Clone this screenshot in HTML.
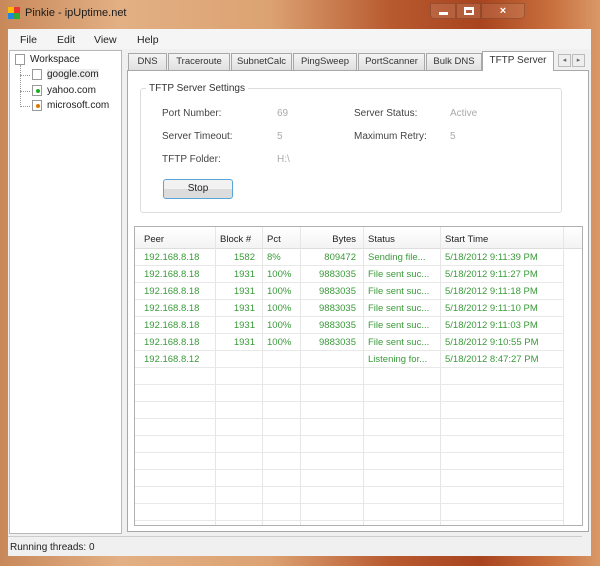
<!DOCTYPE html>
<html><head><style>
*{margin:0;padding:0;box-sizing:border-box}
body{width:600px;height:566px;position:relative;overflow:hidden;font-family:"Liberation Sans",sans-serif;font-size:10px;color:#222;background:#8a3a1e}
.a{position:absolute}
.frame{left:0;top:0;width:600px;height:566px;background:linear-gradient(90deg,#c8885a 0%,#e2b084 20%,#dca272 45%,#b85a30 65%,#a8441e 80%,#c9703e 92%,#d99868 100%)}
.win{left:8px;top:29px;width:583px;height:527px;background:#f0f0f0}
.tab{top:53px;height:17px;background:linear-gradient(#f4f4f4,#e0e0e0);border:1px solid #a8a8a8;border-bottom:none;font-size:9.5px;text-align:center;line-height:16px;color:#333}
.row{left:135px;width:428px;height:17px;border-bottom:1px solid #e8e8e8}
.c{position:absolute;top:3px;color:#3a9a3a;font-size:9.5px}
.vl{top:249px;height:276px;width:1px;background:#e6e6e6}
.lbl{font-size:10px;color:#444}
.val{font-size:10px;color:#aaa}
</style></head><body>
<div class="a frame"></div>
<div class="a" style="left:8px;top:7px;width:12px;height:12px;background:conic-gradient(#e33 0 25%,#3a3 0 50%,#28d 0 75%,#fb0 0)"></div>
<div class="a" style="left:25px;top:7px;font-size:11px;color:#1a1a1a">Pinkie - ipUptime.net</div>
<div class="a" style="left:430px;top:3px;width:26px;height:16px;background:rgba(255,255,255,.12);border:1px solid rgba(90,40,20,.35);border-radius:0 0 0 4px"><div class="a" style="left:8px;top:8px;width:9px;height:3px;background:#fff"></div></div>
<div class="a" style="left:456px;top:3px;width:25px;height:16px;background:rgba(255,255,255,.12);border:1px solid rgba(90,40,20,.35)"><div class="a" style="left:7px;top:3px;width:10px;height:8px;border:2px solid #fff;border-top-width:3px"></div></div>
<div class="a" style="left:481px;top:3px;width:44px;height:16px;background:rgba(255,255,255,.1);border:1px solid rgba(90,40,20,.35);border-radius:0 0 4px 0;color:#fff;text-align:center;font-weight:bold;font-size:11px;line-height:14px">×</div>
<div class="a win"></div>
<div class="a" style="left:8px;top:29px;width:583px;height:20px;background:#f5f5f5"></div>
<div class="a" style="left:20px;top:34px;font-size:10.5px">File</div>
<div class="a" style="left:57px;top:34px;font-size:10.5px">Edit</div>
<div class="a" style="left:94px;top:34px;font-size:10.5px">View</div>
<div class="a" style="left:137px;top:34px;font-size:10.5px">Help</div>
<div class="a" style="left:9px;top:50px;width:113px;height:484px;background:#fff;border:1px solid #b8b8b8"></div>
<div class="a" style="left:15px;top:54px;width:10px;height:11px;border:1px solid #999;background:#fff"></div>
<div class="a" style="left:30px;top:54px;font-size:10px">Workspace</div>
<div class="a" style="left:20px;top:65px;width:1px;height:42px;border-left:1px dotted #999"></div>
<div class="a" style="left:20px;top:75px;width:10px;border-top:1px dotted #999"></div>
<div class="a" style="left:20px;top:91px;width:10px;border-top:1px dotted #999"></div>
<div class="a" style="left:20px;top:106px;width:10px;border-top:1px dotted #999"></div>
<div class="a" style="left:32px;top:69px;width:10px;height:11px;border:1px solid #999;background:#fff"></div>
<div class="a" style="left:32px;top:85px;width:10px;height:11px;border:1px solid #999;background:#fff"><div class="a" style="left:3px;top:3px;width:4px;height:4px;background:#2a2;border-radius:2px"></div></div>
<div class="a" style="left:32px;top:100px;width:10px;height:11px;border:1px solid #999;background:#fff"><div class="a" style="left:3px;top:3px;width:4px;height:4px;background:#d70;border-radius:2px"></div></div>
<div class="a" style="left:47px;top:69px;font-size:10px;background:#eee">google.com</div>
<div class="a" style="left:47px;top:85px;font-size:10px">yahoo.com</div>
<div class="a" style="left:47px;top:100px;font-size:10px">microsoft.com</div>
<div class="a" style="left:127px;top:70px;width:462px;height:462px;background:#fff;border:1px solid #a8a8a8"></div>
<div class="a tab" style="left:128px;width:39px">DNS</div>
<div class="a tab" style="left:168px;width:62px">Traceroute</div>
<div class="a tab" style="left:231px;width:61px">SubnetCalc</div>
<div class="a tab" style="left:293px;width:64px">PingSweep</div>
<div class="a tab" style="left:358px;width:67px">PortScanner</div>
<div class="a tab" style="left:426px;width:56px">Bulk DNS</div>
<div class="a tab" style="left:482px;top:51px;width:72px;height:20px;background:#fff;line-height:18px;font-size:10px">TFTP Server</div>
<div class="a" style="left:558px;top:54px;width:13px;height:13px;border:1px solid #bbb;background:#eee;font-size:7px;text-align:center;line-height:12px;color:#666">◂</div>
<div class="a" style="left:572px;top:54px;width:13px;height:13px;border:1px solid #bbb;background:#eee;font-size:7px;text-align:center;line-height:12px;color:#666">▸</div>
<div class="a" style="left:140px;top:88px;width:422px;height:125px;border:1px solid #ddd;border-radius:3px"></div>
<div class="a" style="left:146px;top:83px;background:#fff;padding:0 3px;font-size:10px;color:#333">TFTP Server Settings</div>
<div class="a lbl" style="left:162px;top:108px">Port Number:</div>
<div class="a val" style="left:277px;top:108px">69</div>
<div class="a lbl" style="left:354px;top:108px">Server Status:</div>
<div class="a val" style="left:450px;top:108px">Active</div>
<div class="a lbl" style="left:162px;top:131px">Server Timeout:</div>
<div class="a val" style="left:277px;top:131px">5</div>
<div class="a lbl" style="left:354px;top:131px">Maximum Retry:</div>
<div class="a val" style="left:450px;top:131px">5</div>
<div class="a lbl" style="left:162px;top:154px">TFTP Folder:</div>
<div class="a val" style="left:277px;top:154px">H:\</div>
<div class="a" style="left:163px;top:179px;width:70px;height:20px;border:1px solid #5aa4d8;border-radius:3px;background:linear-gradient(#f2f2f2 50%,#dcdcdc 50%);text-align:center;line-height:18px;font-size:10px">Stop</div>
<div class="a" style="left:134px;top:226px;width:449px;height:300px;border:1px solid #b0b0b0;background:#fff"></div>
<div class="a" style="left:135px;top:227px;width:447px;height:22px;background:linear-gradient(#fff,#f3f3f3);border-bottom:1px solid #ddd"></div>
<div class="a" style="left:144px;top:234px;font-size:9.5px">Peer</div>
<div class="a" style="left:220px;top:234px;font-size:9.5px">Block #</div>
<div class="a" style="left:267px;top:234px;font-size:9.5px">Pct</div>
<div class="a" style="left:300px;top:234px;width:56px;text-align:right;font-size:9.5px">Bytes</div>
<div class="a" style="left:368px;top:234px;font-size:9.5px">Status</div>
<div class="a" style="left:445px;top:234px;font-size:9.5px">Start Time</div>
<div class="a vl" style="left:215px;top:227px;height:298px"></div>
<div class="a vl" style="left:262px;top:227px;height:298px"></div>
<div class="a vl" style="left:300px;top:227px;height:298px"></div>
<div class="a vl" style="left:363px;top:227px;height:298px"></div>
<div class="a vl" style="left:440px;top:227px;height:298px"></div>
<div class="a vl" style="left:563px;top:227px;height:298px"></div>
<div class="a row" style="top:249px"><span class="c" style="left:9px">192.168.8.18</span><span class="c" style="left:80px;width:40px;text-align:right">1582</span><span class="c" style="left:132px">8%</span><span class="c" style="left:165px;width:56px;text-align:right">809472</span><span class="c" style="left:233px">Sending file...</span><span class="c" style="left:310px">5/18/2012 9:11:39 PM</span></div>
<div class="a row" style="top:266px"><span class="c" style="left:9px">192.168.8.18</span><span class="c" style="left:80px;width:40px;text-align:right">1931</span><span class="c" style="left:132px">100%</span><span class="c" style="left:165px;width:56px;text-align:right">9883035</span><span class="c" style="left:233px">File sent suc...</span><span class="c" style="left:310px">5/18/2012 9:11:27 PM</span></div>
<div class="a row" style="top:283px"><span class="c" style="left:9px">192.168.8.18</span><span class="c" style="left:80px;width:40px;text-align:right">1931</span><span class="c" style="left:132px">100%</span><span class="c" style="left:165px;width:56px;text-align:right">9883035</span><span class="c" style="left:233px">File sent suc...</span><span class="c" style="left:310px">5/18/2012 9:11:18 PM</span></div>
<div class="a row" style="top:300px"><span class="c" style="left:9px">192.168.8.18</span><span class="c" style="left:80px;width:40px;text-align:right">1931</span><span class="c" style="left:132px">100%</span><span class="c" style="left:165px;width:56px;text-align:right">9883035</span><span class="c" style="left:233px">File sent suc...</span><span class="c" style="left:310px">5/18/2012 9:11:10 PM</span></div>
<div class="a row" style="top:317px"><span class="c" style="left:9px">192.168.8.18</span><span class="c" style="left:80px;width:40px;text-align:right">1931</span><span class="c" style="left:132px">100%</span><span class="c" style="left:165px;width:56px;text-align:right">9883035</span><span class="c" style="left:233px">File sent suc...</span><span class="c" style="left:310px">5/18/2012 9:11:03 PM</span></div>
<div class="a row" style="top:334px"><span class="c" style="left:9px">192.168.8.18</span><span class="c" style="left:80px;width:40px;text-align:right">1931</span><span class="c" style="left:132px">100%</span><span class="c" style="left:165px;width:56px;text-align:right">9883035</span><span class="c" style="left:233px">File sent suc...</span><span class="c" style="left:310px">5/18/2012 9:10:55 PM</span></div>
<div class="a row" style="top:351px"><span class="c" style="left:9px">192.168.8.12</span><span class="c" style="left:233px">Listening for...</span><span class="c" style="left:310px">5/18/2012 8:47:27 PM</span></div>
<div class="a row" style="top:368px"></div><div class="a row" style="top:385px"></div><div class="a row" style="top:402px"></div><div class="a row" style="top:419px"></div><div class="a row" style="top:436px"></div><div class="a row" style="top:453px"></div><div class="a row" style="top:470px"></div><div class="a row" style="top:487px"></div><div class="a row" style="top:504px"></div>
<div class="a" style="left:8px;top:536px;width:574px;height:1px;background:#ccc"></div>
<div class="a" style="left:10px;top:542px;font-size:10px">Running threads: 0</div>
</body></html>
